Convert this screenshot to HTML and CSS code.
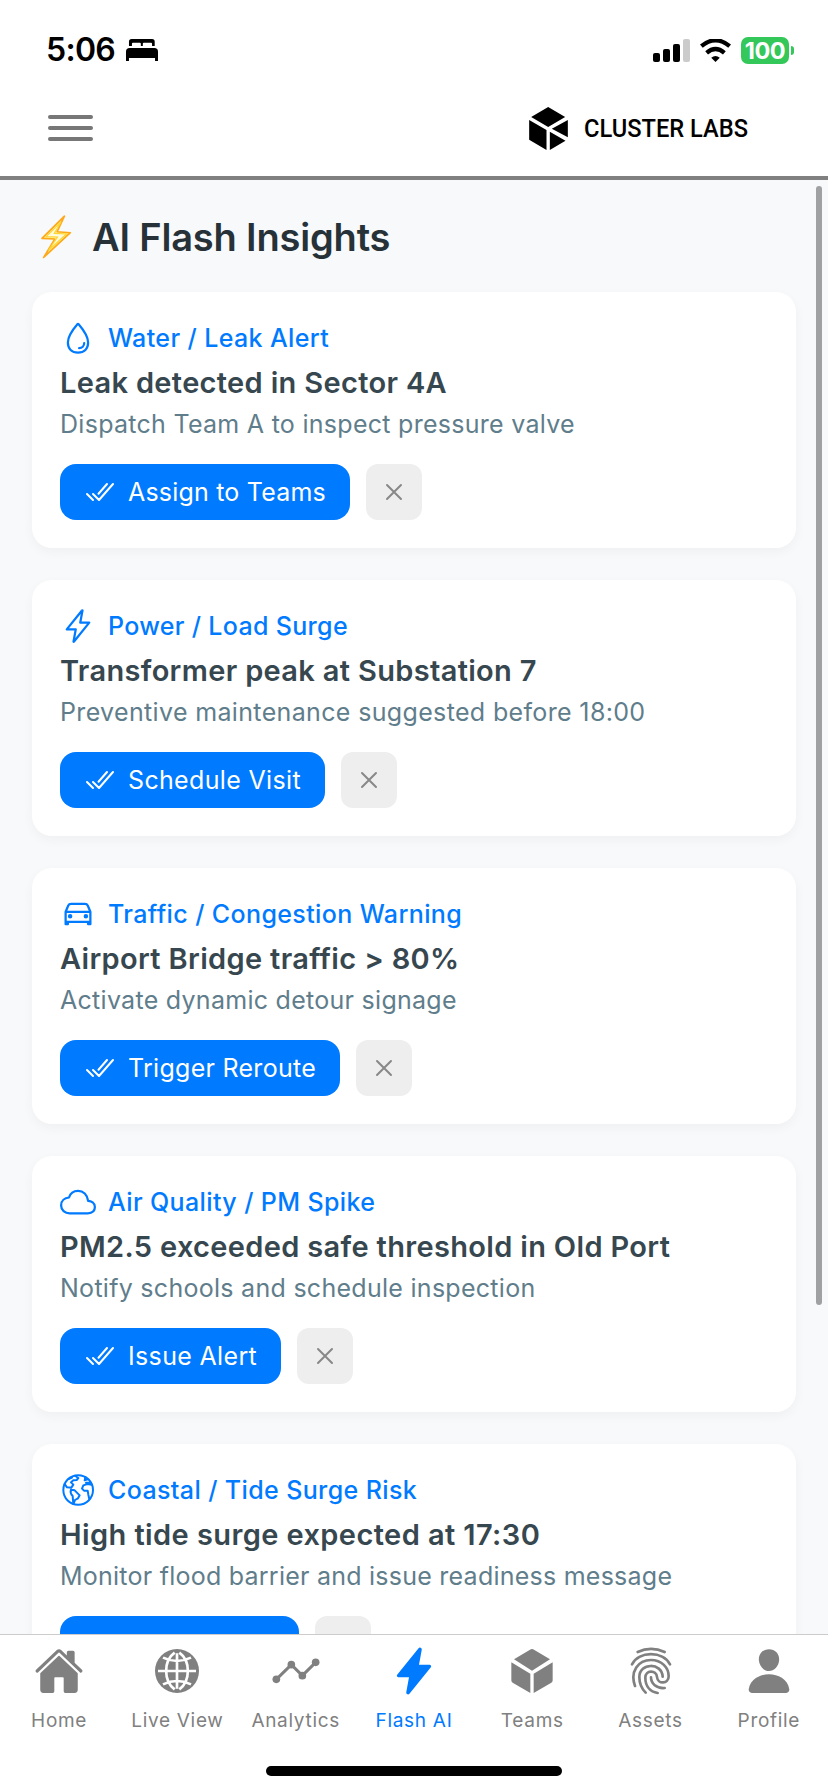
FILE: index.html
```html
<!DOCTYPE html>
<html lang="en">
<head>
<meta charset="utf-8">
<title>AI Flash Insights</title>
<link rel="stylesheet" href="styles.css">
</head>
<body>
<svg class="defs" aria-hidden="true">
  <symbol id="check" viewBox="0 0 512 512"><path d="M464 128L240 384l-96-96M144 384l-96-96M368 128L232 284" fill="none" stroke="currentColor" stroke-width="32" stroke-linecap="round" stroke-linejoin="round"/></symbol>
  <symbol id="close" viewBox="0 0 512 512"><path d="M368 368L144 144M368 144L144 368" fill="none" stroke="currentColor" stroke-width="32" stroke-linecap="round"/></symbol>
</svg>
<div class="screen">
  <div class="status">
    <div class="status-left"><span class="time">5:06</span>
      <svg class="bed" viewBox="0 0 97 66"><path d="M9 21V8Q9 0 17 0H79Q87 0 87 8V21H79V14Q79 11 76 11H54Q51 11 51 14V21H45V14Q45 11 42 11H21Q18 11 18 14V21Z"/><path d="M0 66V38Q0 27 11 27H86Q97 27 97 38V66H88V57H9V66Z"/></svg>
    </div>
    <div class="status-right">
      <svg class="signal" viewBox="0 0 111 69"><rect y="42" width="21" height="27" rx="6"/><rect x="30" y="30" width="21" height="39" rx="6"/><rect x="60" y="15" width="21" height="54" rx="6"/><rect x="90" width="21" height="69" rx="6" fill="#cbcbcb"/></svg>
      <svg class="wifi" viewBox="0 0 94 70"><path d="M4 22Q47-14 90 22M20 42Q47 19 74 42" fill="none" stroke="#000" stroke-width="13"/><path d="M34 57Q47 46 60 57L47 70Z"/></svg>
      <div class="battery"><span class="level">100</span><i class="battery-cap"></i></div>
    </div>
  </div>
  <header class="topbar">
    <div class="menu"><i></i><i></i><i></i></div>
    <div class="brand">
      <svg class="brand-cube" viewBox="345 320 116 129"><path d="M402 320L453 350L402 380L351 350ZM345 359L397 389V449L345 418ZM461 359V411L413 385ZM407 394L454 421L407 449Z"/></svg>
      <svg class="brand-name" viewBox="0 0 164 44"><text x="0" y="31" textLength="164" lengthAdjust="spacingAndGlyphs">CLUSTER LABS</text></svg>
    </div>
  </header>
  <main class="content">
    <h1 class="heading">
      <svg class="bolt" viewBox="120 640 100 138"><path d="M194 646L126 713L165 715L131 771L212 696L172 693Z" fill="#fff09a" stroke="#ffa81a" stroke-width="5" stroke-linejoin="round"/><path d="M184 663L139 708L173 709L146 749L200 700L163 698Z" fill="#fffbe0" stroke="#ffd630" stroke-width="3.500"/></svg>
      <span>AI Flash Insights</span>
    </h1>
    <section class="card water">
      <div class="card-head"><svg class="icon" viewBox="0 0 512 512"><path d="M400 320c0 88.37-55.63 144-144 144s-144-55.63-144-144c0-94.83 103.23-222.85 134.89-259.88a12 12 0 0118.23 0C296.77 97.15 400 225.17 400 320z"/><path d="M344 328a72 72 0 01-72 72"/></svg><span class="label">Water / Leak Alert</span></div>
      <h2 class="title">Leak detected in Sector 4A</h2>
      <p class="desc">Dispatch Team A to inspect pressure valve</p>
      <div class="actions"><button class="primary"><svg><use href="#check"/></svg><span>Assign to Teams</span></button><button class="dismiss" aria-label="Dismiss"><svg><use href="#close"/></svg></button></div>
    </section>
    <section class="card power">
      <div class="card-head"><svg class="icon" viewBox="0 0 512 512"><path d="M315.27 33L96 304h128l-31.51 173.23a2.36 2.36 0 002.33 2.77a2.36 2.36 0 001.89-.95L416 208H288l31.66-173.25a2.45 2.45 0 00-2.44-2.75a2.42 2.42 0 00-1.95 1z"/></svg><span class="label">Power / Load Surge</span></div>
      <h2 class="title">Transformer peak at Substation 7</h2>
      <p class="desc">Preventive maintenance suggested before 18:00</p>
      <div class="actions"><button class="primary"><svg><use href="#check"/></svg><span>Schedule Visit</span></button><button class="dismiss" aria-label="Dismiss"><svg><use href="#close"/></svg></button></div>
    </section>
    <section class="card traffic">
      <div class="card-head"><svg class="icon" viewBox="0 0 512 512"><path d="M80 224l37.78-88.15C123.93 121.5 139.6 112 157.11 112h197.78c17.51 0 33.18 9.5 39.33 23.85L432 224M80 224h352v144H80zM112 368v32H80v-32M432 368v32h-32v-32"/><circle cx="144" cy="288" r="16"/><circle cx="368" cy="288" r="16"/></svg><span class="label">Traffic / Congestion Warning</span></div>
      <h2 class="title">Airport Bridge traffic &gt; 80%</h2>
      <p class="desc">Activate dynamic detour signage</p>
      <div class="actions"><button class="primary"><svg><use href="#check"/></svg><span>Trigger Reroute</span></button><button class="dismiss" aria-label="Dismiss"><svg><use href="#close"/></svg></button></div>
    </section>
    <section class="card air">
      <div class="card-head"><svg class="icon" viewBox="0 0 512 512"><path d="M400 240c-8.89-89.54-71-144-144-144-69 0-113.44 48.2-128 96-60 6-112 43.59-112 112 0 66 54 112 120 112h260c55 0 100-27.44 100-88 0-59.82-53-85.76-96-88z"/></svg><span class="label">Air Quality / PM Spike</span></div>
      <h2 class="title">PM2.5 exceeded safe threshold in Old Port</h2>
      <p class="desc">Notify schools and schedule inspection</p>
      <div class="actions"><button class="primary"><svg><use href="#check"/></svg><span>Issue Alert</span></button><button class="dismiss" aria-label="Dismiss"><svg><use href="#close"/></svg></button></div>
    </section>
    <section class="card coastal">
      <div class="card-head"><svg class="icon earth" viewBox="180 156 108 108"><circle cx="234.500" cy="210" r="44.500"/><path d="M194 192L201 202L214 203L220 194L213 187L220 181L230 180L235 174L226 168M206 177L216 173M213 209L224 211L239 226L234 235L225 240L220 252M213 209Q209 219 218 228L220 252M275 194L262 192L250 196L246 206L252 212L263 212L265 224L268 238M256 171L254 181L263 178M258 188L270 188"/></svg><span class="label">Coastal / Tide Surge Risk</span></div>
      <h2 class="title">High tide surge expected at 17:30</h2>
      <p class="desc">Monitor flood barrier and issue readiness message</p>
      <div class="actions"><button class="primary"><svg><use href="#check"/></svg><span>Enable Alert</span></button><button class="dismiss" aria-label="Dismiss"><svg><use href="#close"/></svg></button></div>
    </section>
    <i class="scrollbar"></i>
  </main>
  <nav class="tabs">
    <a class="tab"><svg viewBox="0 0 512 512"><path d="M261.56 101.28a8 8 0 00-11.06 0L66.4 277.15a8 8 0 00-2.47 5.79L63.9 448a32 32 0 0032 32H192a16 16 0 0016-16V328a8 8 0 018-8h80a8 8 0 018 8v136a16 16 0 0016 16h96.06a32 32 0 0032-32V282.94a8 8 0 00-2.47-5.79z"/><path d="M490.91 244.15l-74.8-71.56V64a16 16 0 00-16-16h-48a16 16 0 00-16 16v32l-57.92-55.38C272.77 35.14 264.71 32 256 32c-8.68 0-16.72 3.14-22.14 8.63l-212.7 203.5c-6.22 6-7 15.87-1.34 22.37A16 16 0 0043 267.56L250.5 69.28a8 8 0 0111.06 0l207.52 198.28a16 16 0 0022.59-.44c6.14-6.36 5.63-16.86-.76-22.97z"/></svg><span>Home</span></a>
    <a class="tab"><svg viewBox="456 678 150 150"><circle cx="531" cy="753" r="66"/><path d="M474 753H588M531 700V806M524 698C490 722 490 784 524 808M538 698C572 722 572 784 538 808M489 713Q531 733 573 713M489 793Q531 773 573 793" fill="none" stroke="#fff" stroke-width="8"/></svg><span>Live View</span></a>
    <a class="tab"><svg viewBox="813 678 150 150"><path d="M829 778L874 734L907 767L947 727" fill="none" stroke="currentColor" stroke-width="9"/><circle cx="829" cy="778" r="11.500"/><circle cx="874" cy="734" r="11.500"/><circle cx="907" cy="767" r="11.500"/><circle cx="947" cy="727" r="11.500"/></svg><span>Analytics</span></a>
    <a class="tab active"><svg viewBox="0 0 512 512"><path d="M194.82 496a18.36 18.36 0 01-18.1-21.53v-.11L204.83 320H96a16 16 0 01-12.44-26.06L302.73 23a18.45 18.45 0 0132.8 13.71c0 .3-.08.59-.13.89L307.19 192H416a16 16 0 0112.44 26.06L209.24 489a18.45 18.45 0 01-14.42 7z"/></svg><span>Flash AI</span></a>
    <a class="tab"><svg viewBox="321 678 150 150"><path d="M390 689Q396 685 402 689L450 718L396 752L342 718ZM334 727L391 761V819L338 788Q334 786 334 781ZM458 727L401 761V819L454 788Q458 786 458 781Z"/></svg><span>Teams</span></a>
    <a class="tab"><svg viewBox="195 33 150 150"><path d="M230 51Q270 32 311 51M213 88C234 47 306 47 327 88M222 153C206 109 232 75 270 75C302 75 323 98 323 124C323 148 290 148 288 126C286 104 253 104 253 128C253 154 268 170 290 174M254 173C240 159 235 144 235 126C235 82 303 82 305 125M270 127C270 146 286 161 311 159" fill="none" stroke="currentColor" stroke-width="8" stroke-linecap="round"/></svg><span>Assets</span></a>
    <a class="tab"><svg viewBox="0 0 512 512"><path d="M332.64 64.58C313.18 43.57 286 32 256 32c-30.16 0-57.43 11.5-76.8 32.38-19.58 21.11-29.12 49.8-26.88 80.78C156.76 206.28 203.27 256 256 256s99.16-49.71 103.67-110.82c2.27-30.7-7.33-59.33-27.03-80.6zM432 480H80a31 31 0 01-24.2-11.13c-6.5-7.77-9.12-18.38-7.18-29.11C57.06 392.94 83.4 353.61 124.8 326c36.78-24.51 83.37-38 131.2-38s94.42 13.5 131.2 38c41.4 27.6 67.74 66.93 76.18 113.75 1.94 10.73-.68 21.34-7.18 29.11A31 31 0 01432 480z"/></svg><span>Profile</span></a>
    <i class="home-indicator"></i>
  </nav>
</div>
</body>
</html>
```
FILE: styles.css
```css
* { box-sizing: border-box; }
body { margin: 0; background: #fff; font-family: Inter, "Liberation Sans", sans-serif; }
svg { display: block; flex: none; }
.defs { position: absolute; width: 0; height: 0; }
.screen { width: 828px; height: 1792px; display: flex; flex-direction: column; overflow: hidden; background: #fff; }

.status { height: 88px; padding: 12px 34px 0 46px; display: flex; justify-content: space-between; align-items: center; flex: none; }
.status-left { display: flex; align-items: center; gap: 11px; }
.time { font-size: 32px; font-weight: 600; line-height: 40px; letter-spacing: -.7px; }
.bed { width: 32px; height: 22px; }
.status-right { display: flex; align-items: center; gap: 10px; }
.signal { width: 37px; height: 23px; }
.wifi { width: 31px; height: 23px; }
.battery { display: flex; align-items: center; gap: 2px; }
.level { width: 48px; height: 27px; border-radius: 7px; background: #34c759; color: #fff; font-size: 23.5px; font-weight: 700; line-height: 27px; text-align: center; letter-spacing: -.5px; }
.battery-cap { width: 3px; height: 9px; border-radius: 0 4px 4px 0; background: #34c759; }

.topbar { height: 92px; flex: none; border-bottom: 4px solid #808080; display: flex; justify-content: space-between; padding: 18px 80px 0 48px; }
.menu { width: 45px; padding-top: 9px; display: flex; flex-direction: column; gap: 7px; }
.menu i { height: 4px; border-radius: 2px; background: #777; }
.brand { height: 44px; display: flex; align-items: center; gap: 16px; }
.brand-cube { width: 39px; height: 43px; }
.brand-name { width: 164px; height: 44px; font-family: Roboto, sans-serif; font-size: 26.5px; font-weight: 500; }

.content { position: relative; flex: 1; min-height: 0; overflow: hidden; background: #f8f9fb; padding: 32px 32px 0; display: flex; flex-direction: column; }
.heading { margin: 0 0 30px; height: 50px; padding-left: 8px; display: flex; align-items: center; gap: 19px; color: #263238; font-size: 38px; font-weight: 600; line-height: 50px; letter-spacing: -.17px; flex: none; }
.bolt { width: 33px; height: 46px; }
.card { flex: none; height: 256px; margin-bottom: 32px; padding: 28px; border-radius: 20px; background: #fff; box-shadow: 0 4px 12px rgba(0, 0, 0, .04); }
.card-head { display: flex; align-items: center; gap: 12px; height: 36px; color: #007aff; }
.icon { width: 36px; height: 36px; fill: none; stroke: currentColor; stroke-width: 32; stroke-linejoin: round; stroke-linecap: round; }
.earth { stroke-width: 6; }
.label { font-size: 25px; font-weight: 500; line-height: 36px; letter-spacing: .38px; }
.title { margin: 7px 0 0; font-size: 29px; font-weight: 600; line-height: 40px; letter-spacing: .33px; color: #37474f; white-space: nowrap; }
.desc { margin: 3px 0 0; font-size: 25px; font-weight: 400; line-height: 36px; letter-spacing: .28px; color: #607d8b; white-space: nowrap; }
.actions { margin-top: 22px; display: flex; gap: 16px; }
.primary, .dismiss { border: 0; font: inherit; height: 56px; display: flex; align-items: center; justify-content: center; }
.primary { padding: 0 24px; gap: 12px; border-radius: 16px; background: #007aff; color: #fff; font-size: 25px; letter-spacing: .34px; }
.primary svg, .dismiss svg { width: 32px; height: 32px; }
.dismiss { width: 56px; padding: 0; border-radius: 12px; background: #eee; color: #888; }
.water .primary { letter-spacing: .2px; }
.traffic .primary { letter-spacing: .28px; }
.power .desc { letter-spacing: .35px; }
.power .label { letter-spacing: .32px; }
.coastal .title { letter-spacing: .41px; }
.coastal .desc { letter-spacing: .24px; }
.scrollbar { position: absolute; top: 6px; right: 6px; width: 6px; height: 1119px; border-radius: 3px; background: #9fa1a2; }

.tabs { position: relative; flex: none; height: 158px; border-top: 1px solid #ccc; background: #fff; display: grid; grid-template-columns: repeat(7, 1fr); padding-top: 11px; }
.tab { display: flex; flex-direction: column; align-items: center; gap: 13px; color: #808080; font-size: 19px; line-height: 24px; letter-spacing: .7px; white-space: nowrap; }
.tab.active { color: #007aff; }
.tab svg { width: 50px; height: 50px; fill: currentColor; }
.home-indicator { position: absolute; left: 266px; bottom: 16px; width: 296px; height: 10px; border-radius: 5px; background: #000; }
```
